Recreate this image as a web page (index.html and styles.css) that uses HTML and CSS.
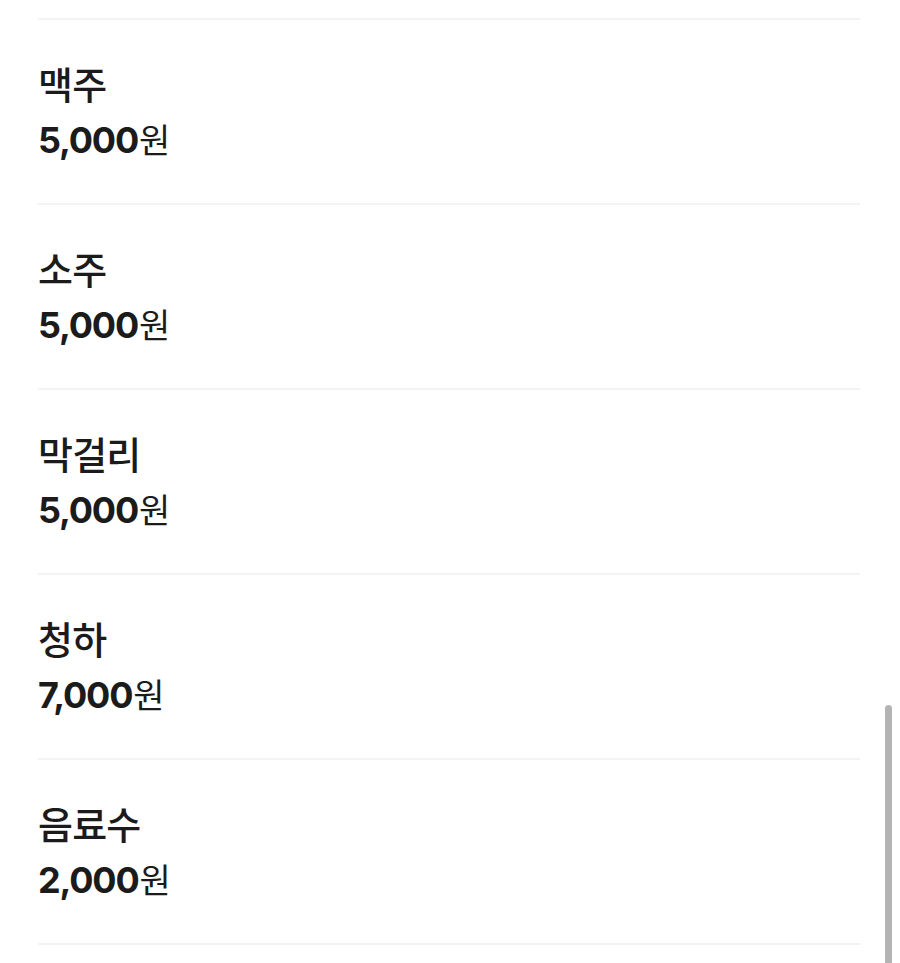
FILE: index.html
```html
<!DOCTYPE html>
<html lang="ko">
<head>
<meta charset="utf-8">
<title>메뉴</title>
<link rel="stylesheet" href="styles.css">
</head>
<body>
<div class="page">
  <ul class="menu">
    <li class="item"><div class="name">맥주</div><div class="price"><span class="num">5,000</span><span class="won">원</span></div></li>
    <li class="item"><div class="name">소주</div><div class="price"><span class="num">5,000</span><span class="won">원</span></div></li>
    <li class="item"><div class="name">막걸리</div><div class="price"><span class="num">5,000</span><span class="won">원</span></div></li>
    <li class="item"><div class="name">청하</div><div class="price"><span class="num">7,000</span><span class="won">원</span></div></li>
    <li class="item"><div class="name">음료수</div><div class="price"><span class="num">2,000</span><span class="won">원</span></div></li>
  </ul>
  <div class="scrollbar"></div>
</div>
</body>
</html>
```
FILE: styles.css
```css
html, body {
  margin: 0;
  padding: 0;
  background: #ffffff;
  height: 100%;
  overflow: hidden;
}
.page {
  position: relative;
  height: 963px;
  padding: 18px 40px 0 38px;
  box-sizing: border-box;
  font-family: "Noto Sans CJK KR", "Noto Sans", sans-serif;
  color: #1b1b1b;
}
.menu {
  list-style: none;
  margin: 0;
  padding: 0;
  border-top: 2px solid #f3f3f3;
}
.item {
  height: 185px;
  box-sizing: border-box;
  border-bottom: 2px solid #f3f3f3;
  padding-top: 35px;
}
.name {
  font-size: 38px;
  font-weight: 500;
  line-height: 56px;
  letter-spacing: -0.8px;
}
.price {
  font-size: 36px;
  line-height: 52px;
}
.num {
  font-family: "Inter", "Noto Sans CJK KR", sans-serif;
  font-weight: 700;
  letter-spacing: -1.2px;
}
.won {
  font-weight: 400;
  font-size: 34px;
  margin-left: 1px;
}
.scrollbar {
  position: absolute;
  left: 885px;
  top: 705px;
  width: 7px;
  height: 270px;
  border-radius: 4px;
  background: #b4b4b4;
}
```
